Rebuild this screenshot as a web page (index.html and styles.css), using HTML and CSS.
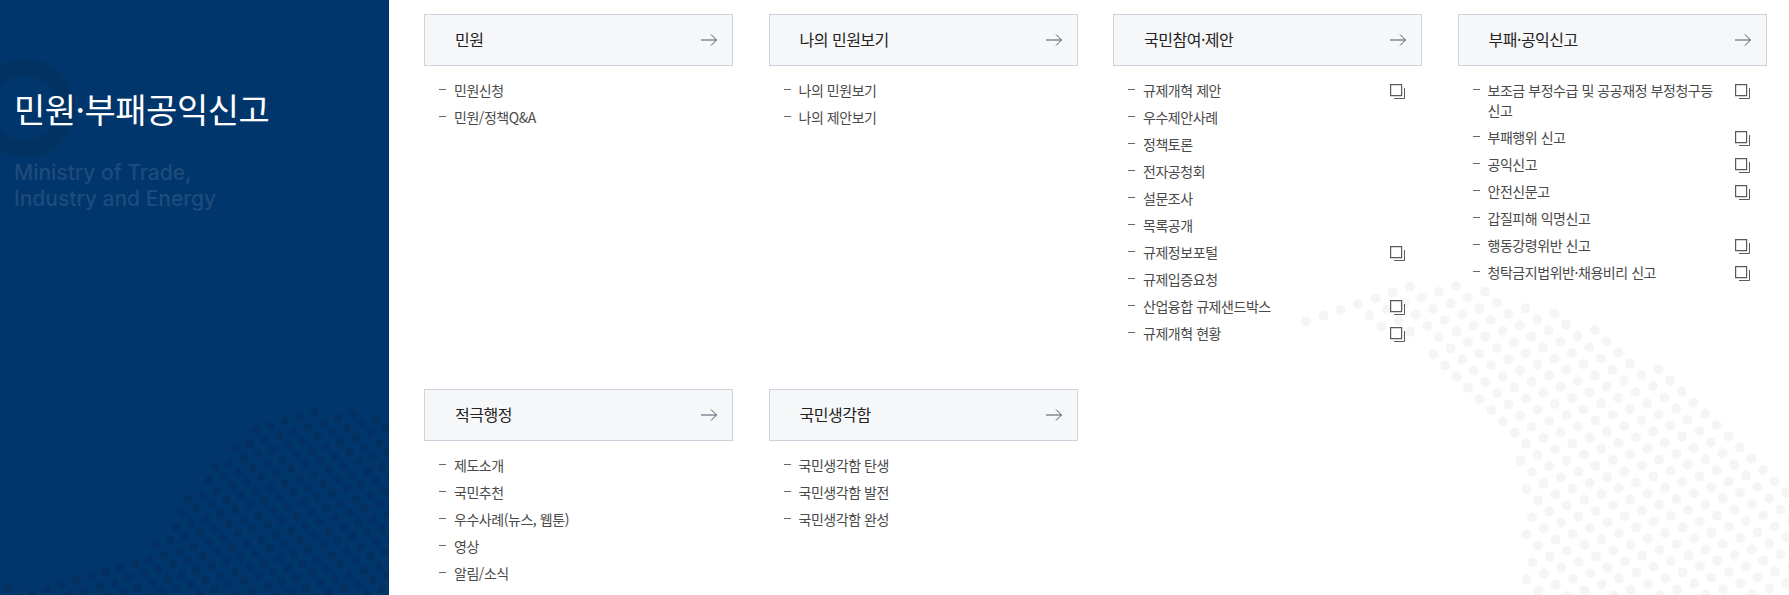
FILE: index.html
```html
<!DOCTYPE html>
<html lang="ko">
<head>
<meta charset="utf-8">
<title>민원·부패공익신고</title>
<link rel="stylesheet" href="styles.css">
</head>
<body>
<svg class="defs" width="0" height="0" aria-hidden="true">
  <defs>
    <symbol id="arrow" viewBox="0 0 16 14"><path d="M0 7H15.4M10 1.5L15.5 7L10 12.5" fill="none" stroke="#4b5563" stroke-width="1"/></symbol>
    <symbol id="copy" viewBox="0 0 15 15"><path d="M.6.6H11.6V11.6H.6Z" fill="none" stroke="#5a5a5a" stroke-width="1.2"/><path d="M14.5 4V14.5H4" fill="none" stroke="#5a5a5a" stroke-width="1"/></symbol>
  </defs>
</svg>
<div class="page">
  <aside class="side">
    <svg class="side-art" viewBox="0 0 389 595" width="389" height="595" aria-hidden="true">
      <circle class="ring" cx="25" cy="108" r="41"/>
      <g id="dots-dark" class="dots-dark"></g>
    </svg>
    <h1 class="side-title">민원·부패공익신고</h1>
    <p class="side-sub">Ministry of Trade,<br>Industry and Energy</p>
  </aside>
  <main class="main">
    <svg class="main-art" viewBox="0 0 1789 595" width="1789" height="595" aria-hidden="true">
      <g id="dots-light" class="dots-light"></g>
    </svg>
    <div class="grid">
      <section class="card">
        <a class="card-head"><span>민원</span><svg class="arrow"><use href="#arrow"/></svg></a>
        <ul class="list">
          <li class="item"><span>민원신청</span></li>
          <li class="item"><span>민원/정책Q&amp;A</span></li>
        </ul>
      </section>
      <section class="card">
        <a class="card-head"><span>나의 민원보기</span><svg class="arrow"><use href="#arrow"/></svg></a>
        <ul class="list">
          <li class="item"><span>나의 민원보기</span></li>
          <li class="item"><span>나의 제안보기</span></li>
        </ul>
      </section>
      <section class="card">
        <a class="card-head"><span>국민참여·제안</span><svg class="arrow"><use href="#arrow"/></svg></a>
        <ul class="list">
          <li class="item"><span>규제개혁 제안</span><svg class="copy"><use href="#copy"/></svg></li>
          <li class="item"><span>우수제안사례</span></li>
          <li class="item"><span>정책토론</span></li>
          <li class="item"><span>전자공청회</span></li>
          <li class="item"><span>설문조사</span></li>
          <li class="item"><span>목록공개</span></li>
          <li class="item"><span>규제정보포털</span><svg class="copy"><use href="#copy"/></svg></li>
          <li class="item"><span>규제입증요청</span></li>
          <li class="item"><span>산업융합 규제샌드박스</span><svg class="copy"><use href="#copy"/></svg></li>
          <li class="item"><span>규제개혁 현황</span><svg class="copy"><use href="#copy"/></svg></li>
        </ul>
      </section>
      <section class="card">
        <a class="card-head"><span>부패·공익신고</span><svg class="arrow"><use href="#arrow"/></svg></a>
        <ul class="list">
          <li class="item"><span>보조금 부정수급 및 공공재정 부정청구등 신고</span><svg class="copy"><use href="#copy"/></svg></li>
          <li class="item"><span>부패행위 신고</span><svg class="copy"><use href="#copy"/></svg></li>
          <li class="item"><span>공익신고</span><svg class="copy"><use href="#copy"/></svg></li>
          <li class="item"><span>안전신문고</span><svg class="copy"><use href="#copy"/></svg></li>
          <li class="item"><span>갑질피해 익명신고</span></li>
          <li class="item"><span>행동강령위반 신고</span><svg class="copy"><use href="#copy"/></svg></li>
          <li class="item"><span>청탁금지법위반·채용비리 신고</span><svg class="copy"><use href="#copy"/></svg></li>
        </ul>
      </section>
      <section class="card">
        <a class="card-head"><span>적극행정</span><svg class="arrow"><use href="#arrow"/></svg></a>
        <ul class="list">
          <li class="item"><span>제도소개</span></li>
          <li class="item"><span>국민추천</span></li>
          <li class="item"><span>우수사례(뉴스, 웹툰)</span></li>
          <li class="item"><span>영상</span></li>
          <li class="item"><span>알림/소식</span></li>
        </ul>
      </section>
      <section class="card">
        <a class="card-head"><span>국민생각함</span><svg class="arrow"><use href="#arrow"/></svg></a>
        <ul class="list">
          <li class="item"><span>국민생각함 탄생</span></li>
          <li class="item"><span>국민생각함 발전</span></li>
          <li class="item"><span>국민생각함 완성</span></li>
        </ul>
      </section>
    </div>
  </main>
</div>
<script src="dots.js"></script>
</body>
</html>
```
FILE: styles.css
```css
* { box-sizing: border-box; }
html, body { margin: 0; padding: 0; height: 595px; overflow: hidden; background: #fff; }
body { font-family: "Noto Sans CJK KR", "Noto Sans", sans-serif; color: #444; }
.defs { position: absolute; }
.page { display: flex; height: 595px; }

.side { position: relative; flex: 0 0 389px; background: #00366b; padding: 86px 0 0 14px; overflow: hidden; }
.side-art { position: absolute; left: 0; top: 0; }
.ring { fill: none; stroke: #023262; stroke-width: 16; }
.dots-dark { fill: #033060; }
.side-title { position: relative; margin: 0; font-size: 34px; font-weight: 400; line-height: 46px; letter-spacing: -0.5px; color: #fff; white-space: nowrap; }
.side-sub { position: relative; margin: 28px 0 0; font-family: Inter, "Noto Sans", sans-serif; font-size: 21px; font-weight: 500; line-height: 26px; color: #1f4b7c; }

.main { position: relative; flex: 1; padding: 14px 0 0 35px; overflow: hidden; }
.main-art { position: absolute; left: -389px; top: 0; }
.dots-light { fill: #f5f5f5; }

.grid { position: relative; display: grid; grid-template-columns: repeat(4, 309px); column-gap: 35.5px; row-gap: 46px; align-items: start; }
.card-head { display: flex; align-items: center; justify-content: space-between; height: 52px; padding: 0 15px 2px 30px; background: #f6f7f9; border: 1px solid #ccd3dc; font-size: 16px; letter-spacing: -0.5px; color: #222; }
.arrow { width: 16px; height: 14px; margin-top: 2px; }
.list { list-style: none; margin: 0; padding: 14px 0 0; display: flex; flex-direction: column; gap: 7px; }
.item { position: relative; display: flex; justify-content: space-between; align-items: flex-start; padding: 0 17px 0 30px; font-size: 14px; line-height: 20px; letter-spacing: -0.45px; color: #4a4a4a; word-break: keep-all; }
.item::before { content: ""; position: absolute; left: 15px; top: 9px; width: 7px; height: 1px; background: #666; }
.item span { max-width: 245px; }
.copy { flex: none; width: 15px; height: 15px; margin-top: 4px; }
```
FILE: dots.js
```js
// Decorative halftone bands: lattice points kept only when their centre falls inside the band outline.
(function () {
  var NS = "http://www.w3.org/2000/svg";

  function inside(p, poly) {
    var hit = false;
    for (var i = 0, j = poly.length - 1; i < poly.length; j = i++) {
      var a = poly[i], b = poly[j];
      if ((a[1] > p[1]) !== (b[1] > p[1]) &&
          p[0] < (b[0] - a[0]) * (p[1] - a[1]) / (b[1] - a[1]) + a[0]) hit = !hit;
    }
    return hit;
  }

  function band(id, o, a, b, r, poly) {
    var g = document.getElementById(id);
    for (var i = -80; i <= 80; i++) {
      for (var j = -80; j <= 80; j++) {
        var p = [o[0] + i * a[0] + j * b[0], o[1] + i * a[1] + j * b[1]];
        if (!inside(p, poly)) continue;
        var c = document.createElementNS(NS, "circle");
        c.setAttribute("cx", p[0].toFixed(1));
        c.setAttribute("cy", p[1].toFixed(1));
        c.setAttribute("r", r);
        g.appendChild(c);
      }
    }
  }

  band("dots-light", [1421.7, 343], [11.6, 11.2], [17.3, -5.8], 5, [
    [1281, 322], [1315, 308], [1345, 296], [1408, 281], [1450, 283], [1522, 300],
    [1600, 331], [1664, 370], [1723, 426], [1757, 459], [1800, 505], [1800, 610],
    [1526, 610], [1524, 537], [1522, 509], [1516, 478], [1510, 450], [1487, 425],
    [1478, 399], [1456, 377], [1421, 342], [1395, 337], [1353, 320], [1320, 326]
  ]);

  band("dots-dark", [188, 499], [8.8, 9.7], [14.7, -4.3], 4, [
    [-10, 600], [0, 592], [13, 586], [50, 587], [80, 578], [108, 571], [143, 549],
    [163, 531], [183, 512], [187, 498], [206, 479], [211, 466], [231, 449], [247, 432],
    [262, 427], [292, 418], [307, 414], [337, 407], [360, 412], [400, 418], [400, 610]
  ]);
})();
```
